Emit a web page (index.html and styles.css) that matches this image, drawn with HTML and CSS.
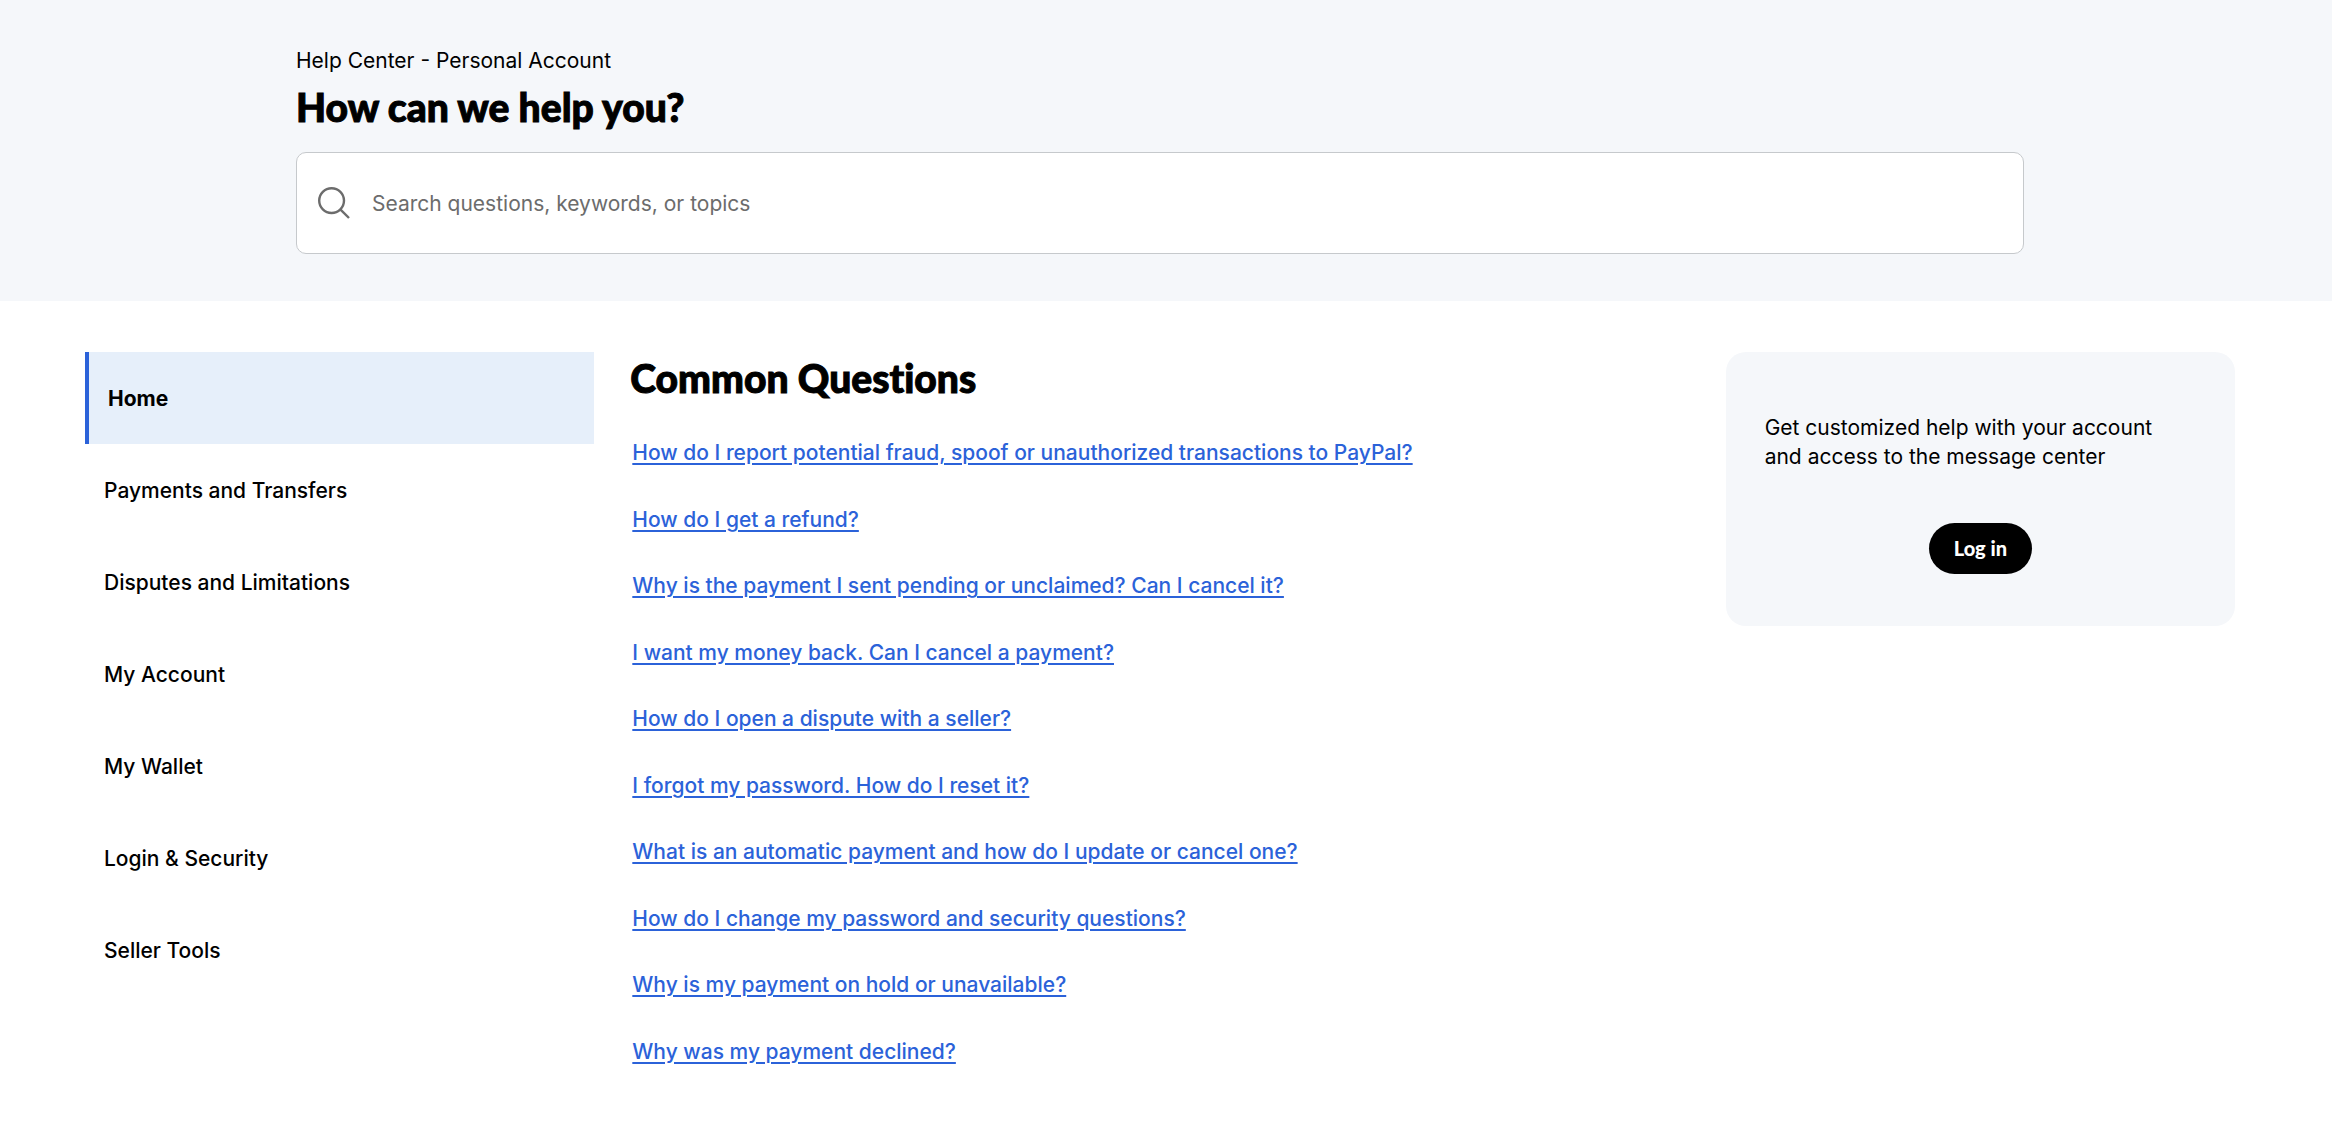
FILE: index.html
```html
<!DOCTYPE html>
<html lang="en">

<head>
    <meta charset="UTF-8">
    <meta name="viewport" content="width=device-width, initial-scale=1.0">
    <title>Help Center - Personal Account</title>
    <link rel="stylesheet" href="styles.css">
</head>

<body>
    <header class="hero">
        <div class="hero-content">
            <p class="hero-label">Help Center - Personal Account</p>
            <h1 class="title">How can we help you?</h1>
            <form class="search" role="search">
                <svg class="search-icon" viewBox="0 0 32 32" aria-hidden="true">
                    <circle cx="13.6" cy="13.6" r="12.4" />
                    <path d="M22.3 22.3 L31 31" />
                </svg>
                <input class="search-input" type="text" aria-label="Search questions, keywords, or topics" placeholder="Search questions, keywords, or topics">
            </form>
        </div>
    </header>
    <main class="layout">
        <nav class="menu" aria-label="Help topics">
            <a class="active" href="#home">Home</a>
            <a href="#payments">Payments and Transfers</a>
            <a href="#disputes">Disputes and Limitations</a>
            <a href="#account">My Account</a>
            <a href="#wallet">My Wallet</a>
            <a href="#security">Login &amp; Security</a>
            <a href="#seller">Seller Tools</a>
        </nav>
        <section class="questions">
            <h2 class="title">Common Questions</h2>
            <ul class="question-list">
                <li><a href="#fraud">How do I report potential fraud, spoof or unauthorized transactions to PayPal?</a></li>
                <li><a href="#refund">How do I get a refund?</a></li>
                <li><a href="#pending">Why is the payment I sent pending or unclaimed? Can I cancel it?</a></li>
                <li><a href="#cancel">I want my money back. Can I cancel a payment?</a></li>
                <li><a href="#dispute">How do I open a dispute with a seller?</a></li>
                <li><a href="#reset">I forgot my password. How do I reset it?</a></li>
                <li><a href="#automatic">What is an automatic payment and how do I update or cancel one?</a></li>
                <li><a href="#password">How do I change my password and security questions?</a></li>
                <li><a href="#hold">Why is my payment on hold or unavailable?</a></li>
                <li><a href="#declined">Why was my payment declined?</a></li>
            </ul>
        </section>
        <aside class="login-card">
            <p>Get customized help with your account and access to the message center</p>
            <button class="login-button" type="button">Log in</button>
        </aside>
    </main>
</body>

</html>
```
FILE: styles.css
```css
*,
*:before,
*:after {
    box-sizing: border-box;
}

body {
    margin: 0;
    background-color: #fff;
    color: #000;
    font-family: Inter, "Liberation Sans", sans-serif;
    font-size: 21px;
    line-height: 30px;
}

a {
    color: inherit;
    text-decoration: none;
}

.title {
    margin: 0;
    font-family: Lato, sans-serif;
    font-size: 39px;
    font-weight: 900;
    font-variant-ligatures: none;
    line-height: 52px;
    -webkit-text-stroke: 1px #000;
}

/* Header with search */
.hero {
    padding: 46px 308px 47px 296px;
    background-color: #f5f7fa;
}

.hero-label {
    margin: 0 0 5px;
}

.hero .title {
    margin-bottom: 19px;
}

.search {
    display: flex;
    align-items: center;
    gap: 22px;
    height: 102px;
    padding: 0 21px;
    border: 1px solid #c6c9cc;
    border-radius: 10px;
    background-color: #fff;
}

.search-icon {
    flex: none;
    width: 32px;
    height: 32px;
    fill: none;
    stroke: #6c6c6c;
    stroke-width: 2.4;
}

.search-input {
    flex: 1;
    height: 100%;
    padding: 0;
    border: 0;
    outline: none;
    background: none;
    font: inherit;
}

.search-input::placeholder {
    color: #6c6c6c;
    opacity: 1;
}

/* Three columns */
.layout {
    display: grid;
    grid-template-columns: 1fr 2.08fr 1fr;
    gap: 36px;
    align-items: start;
    padding: 51px 97px 24px 85px;
}

.menu {
    display: flex;
    flex-direction: column;
    font-weight: 500;
}

.menu a {
    padding: 32px 19px 30px;
}

.menu .active {
    border-left: 4px solid #2b62d9;
    background-color: #e6effa;
    font-weight: 700;
}

.question-list {
    display: grid;
    grid-auto-rows: 1fr;
    align-items: center;
    min-height: 665px;
    margin: 16px 0 0;
    padding: 0 2px;
    list-style: none;
}

.question-list a {
    color: #2b62d9;
    font-weight: 500;
    text-decoration: underline;
    text-decoration-thickness: 2px;
    text-underline-offset: 3px;
}

.login-card {
    padding: 61px 39px 52px;
    border-radius: 20px;
    background-color: #f5f7fa;
    text-align: center;
}

.login-card p {
    margin: 0 0 52px;
    padding-right: 32px;
    line-height: 29px;
    text-align: left;
}

.login-button {
    padding: 10px 25px;
    border: 0;
    border-radius: 26px;
    background-color: #000;
    color: #fff;
    font-family: Lato, sans-serif;
    font-size: 20px;
    font-weight: 900;
    line-height: 31px;
}
```
